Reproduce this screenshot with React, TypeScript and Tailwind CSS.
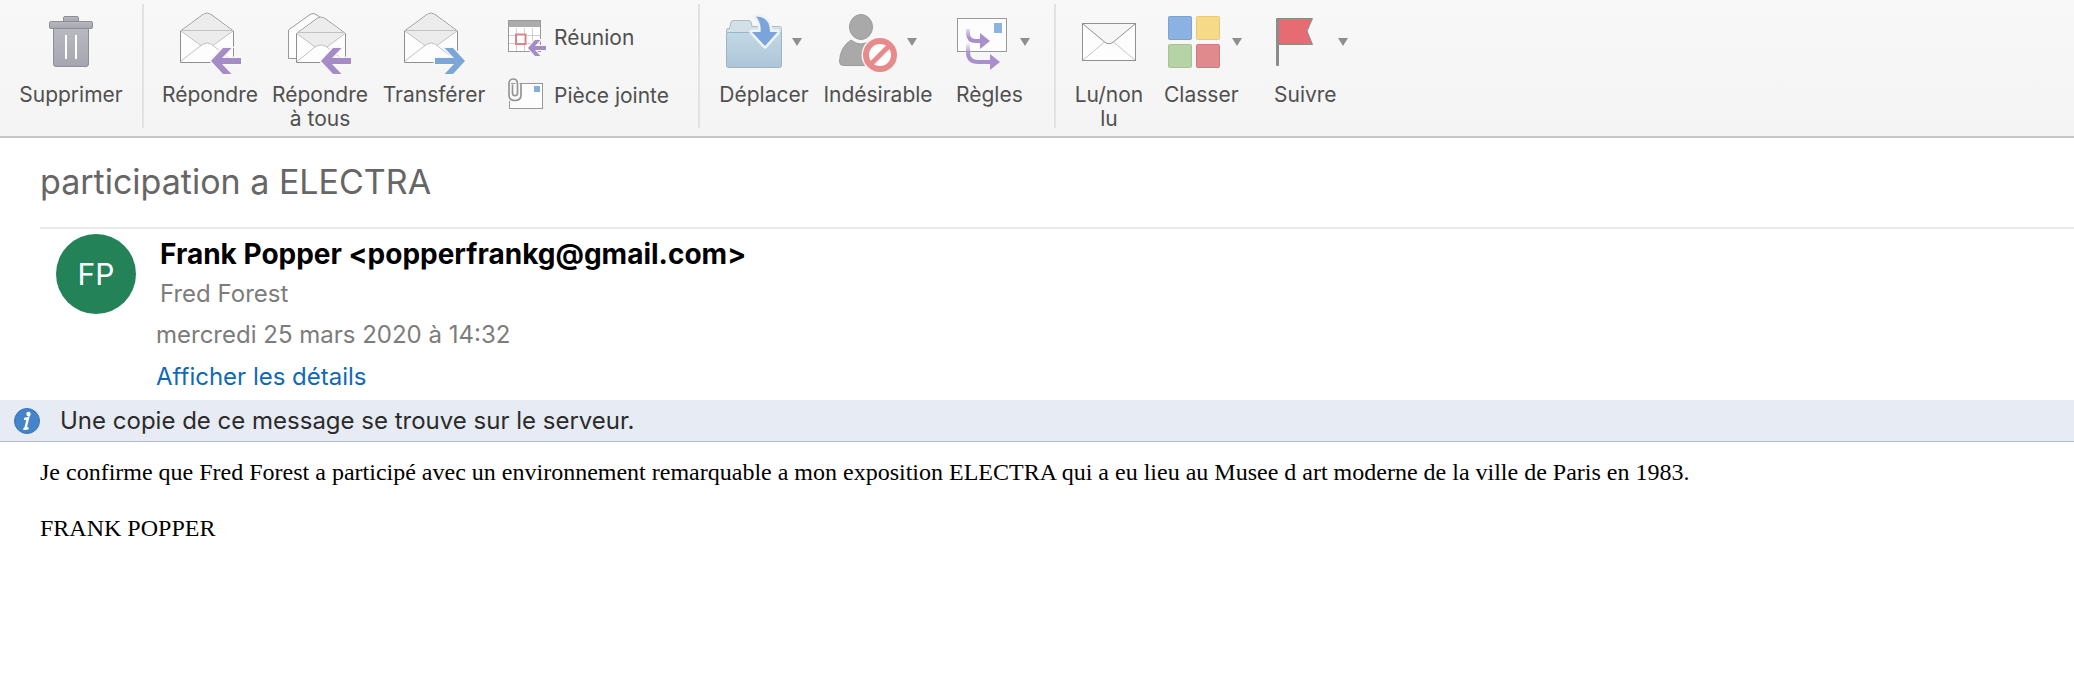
import React from 'react';

const Chevron = () => (
  <svg width="10" height="8" viewBox="0 0 10 8" className="mb-1">
    <path d="M0 0h10L5 8z" fill="#8f8f8f" />
  </svg>
);

const TrashIcon = () => (
  <svg width="44" height="64" viewBox="0 0 44 64">
    <defs>
      <linearGradient id="trash" x1="0" y1="0" x2="0" y2="1">
        <stop offset="0" stopColor="#b9b9c1" />
        <stop offset="1" stopColor="#a6a6b0" />
      </linearGradient>
    </defs>
    <g fill="url(#trash)" stroke="#8e8e96">
      <path d="M14.500 9.500V6q0-1.500 1.500-1.500h12q1.500 0 1.500 1.500v3.500" />
      <path d="M4.500 16.500h35V52q0 2.500-2.500 2.500H7q-2.500 0-2.500-2.500z" />
      <rect x="0.500" y="9.500" width="43" height="7" rx="1.500" />
    </g>
    <path d="M17 23v24M27 23v24" stroke="#fff" strokeWidth="2" />
  </svg>
);

const OpenEnvelope = () => (
  <g strokeLinejoin="round">
    <path d="M1.500 19 24 2.500q4-3 8 0L54.500 19v31.500h-53z" fill="#fdfdfd" stroke="#8f8f8f" />
    <path d="M2 19 24 3q4-3 8 0L54 19 34 33.500q-6-5-12 0z" fill="#ececec" />
    <path d="M2 18.500h52M2 19l20 14.500M54 19 34 33.500M2 49l20-15.500q6-5 12 0L54 49" fill="none" stroke="#c2c2c2" />
  </g>
);

const ReplyIcon = () => (
  <svg width="62" height="64" viewBox="0 0 62 64">
    <OpenEnvelope />
    <path
      d="M32 49 44 36h8.500L43 46h19v6H43l9.500 10H44z"
      fill="#a68cc7"
      stroke="#f8f8f8"
      strokeWidth="3"
      paintOrder="stroke"
    />
  </svg>
);

const ReplyAllIcon = () => (
  <svg width="64" height="64" viewBox="0 0 64 64">
    <path d="M.500 18 22 2.500q3-2 6 0L50 18v28.500H.500z" fill="#fdfdfd" stroke="#999" />
    <g strokeLinejoin="round">
      <path d="M8.500 21.500 29 6.500q4-3 8 0l20.500 15v29h-49z" fill="#fdfdfd" stroke="#8f8f8f" />
      <path d="M9 21.500 29 7q4-3 8 0l20 14.500-18 13.500q-6-4-12 0z" fill="#ececec" />
      <path
        d="M9 20.500h48M9 21.500 27 35M57 21.500 39 35M9 49.500 27 35q6-4 12 0l18 14.500"
        fill="none"
        stroke="#c2c2c2"
      />
    </g>
    <path
      d="M33 49 45 36h8.500L44 46h19v6H44l9.500 10H45z"
      fill="#a68cc7"
      stroke="#f8f8f8"
      strokeWidth="3"
      paintOrder="stroke"
    />
  </svg>
);

const ForwardIcon = () => (
  <svg width="62" height="64" viewBox="0 0 62 64">
    <OpenEnvelope />
    <path
      d="M62 49 50 36h-8.500L51 46H32v6h19l-9.500 10H50z"
      fill="#7ba6d8"
      stroke="#f8f8f8"
      strokeWidth="3"
      paintOrder="stroke"
    />
  </svg>
);

const MeetingIcon = () => (
  <svg width="38" height="36" viewBox="0 0 38 36">
    <rect x="0.500" y="0.500" width="32" height="31" fill="#fff" stroke="#999" />
    <path d="M1 1h31v6H1z" fill="#acacae" />
    <path d="M8.500 8v23M16.500 8v23M24.500 8v23M1 15.500h31M1 23.500h31" stroke="#cfcfcf" />
    <rect x="8" y="14.500" width="9.500" height="9.500" fill="#fff" stroke="#d98585" strokeWidth="2" />
    <path
      d="M20 28l7-8h5.500L27 26h11v4H27l5.500 6H27z"
      fill="#a68cc7"
      stroke="#f8f8f8"
      strokeWidth="2"
      paintOrder="stroke"
    />
  </svg>
);

const clip = 'M4.500 7v8q0 2.700 2.500 2.700t2.500-2.700V6q0-5-4.300-5T1 6v11q0 5.500 6 5.500t6-5.500V6.500';

const AttachmentIcon = () => (
  <svg width="36" height="36" viewBox="0 0 36 36">
    <rect x="1.500" y="5.500" width="33" height="25" fill="#fdfdfd" stroke="#999" />
    <path d="M26 8h6v6h-6z" fill="#86aedd" />
    <path d={clip} fill="none" stroke="#fafafa" strokeWidth="4" />
    <path d={clip} fill="none" stroke="#959595" strokeWidth="1.700" strokeLinecap="round" />
  </svg>
);

const MoveIcon = () => (
  <svg width="56" height="64" viewBox="0 0 56 64">
    <defs>
      <linearGradient id="folder" x1="0" y1="0" x2="0" y2="1">
        <stop offset="0" stopColor="#c3d8e5" />
        <stop offset="1" stopColor="#adc5d8" />
      </linearGradient>
    </defs>
    <path
      d="M.500 20.500V18q0-1.500 1.500-1.500h1.500L5 10q.500-1.500 2-1.500h16q1.500 0 2 1.500l1 4.500h27.500q2 0 2 2V30H.500z"
      fill="#d3e0e7"
      stroke="#a9bcc9"
    />
    <rect x="0.500" y="20.500" width="55" height="35" rx="2" fill="url(#folder)" stroke="#9cb4c6" />
    <path
      d="M30 4.500q14 0 14 15.500h7.500L39 34 26 20h8.500q1-9-4.500-15.500z"
      fill="#7aa4da"
      stroke="#eef3f7"
      strokeWidth="5"
      strokeLinejoin="round"
      paintOrder="stroke"
    />
  </svg>
);

const JunkIcon = () => (
  <svg width="58" height="64" viewBox="0 0 58 64">
    <g fill="#a9a9a9" stroke="#9b9b9b">
      <ellipse cx="22" cy="15" rx="11.500" ry="12.500" />
      <path d="M12 28q10 8 20 0 6 6 6 25.500H4.500q-4 0-4-4Q1 35 12 28z" />
    </g>
    <circle cx="41" cy="43" r="18.500" fill="#f6f6f6" />
    <circle cx="41" cy="43" r="14" fill="#fff" stroke="#e88a8b" strokeWidth="6" />
    <path d="M31.500 52.500l19-19" stroke="#e88a8b" strokeWidth="5" />
  </svg>
);

const RulesIcon = () => (
  <svg width="54" height="64" viewBox="-1 0 54 64">
    <defs>
      <linearGradient id="fade" gradientUnits="userSpaceOnUse" x1="0" y1="16" x2="0" y2="26">
        <stop offset="0" stopColor="#a98fcb" stopOpacity="0.200" />
        <stop offset="1" stopColor="#a98fcb" />
      </linearGradient>
      <linearGradient id="fadeLow" gradientUnits="userSpaceOnUse" x1="0" y1="30" x2="0" y2="42">
        <stop offset="0" stopColor="#a98fcb" stopOpacity="0" />
        <stop offset="1" stopColor="#a98fcb" />
      </linearGradient>
    </defs>
    <rect x="0.500" y="6.500" width="49" height="33" fill="#fdfdfd" stroke="#999" />
    <path d="M37 11h8v10h-8z" fill="#8db4e0" />
    <path d="M11 17v4q0 8 8 8h6" fill="none" stroke="url(#fade)" strokeWidth="4" />
    <path d="M11 31v9q0 10 10 10h13" fill="none" stroke="url(#fadeLow)" strokeWidth="4" />
    <path d="M23 21l10 8-10 8zM33 42l10 8-10 8z" fill="#a98fcb" />
  </svg>
);

const UnreadIcon = () => (
  <svg width="54" height="64" viewBox="0 0 54 64">
    <rect x="0.500" y="11.500" width="53" height="37" fill="#fdfdfd" stroke="#919191" />
    <path d="M1 48l21-17.500M53 48 32 30.500" stroke="#c6c6c6" />
    <path d="M1 12l21 17.500q5 4.500 10 0L53 12" fill="#f6f6f6" stroke="#919191" />
  </svg>
);

const CategoryIcon = () => (
  <svg width="58" height="64" viewBox="-4 0 58 64">
    <rect x="0.500" y="4.500" width="23" height="23" rx="1" fill="#8bb2e2" stroke="#7da3d1" />
    <rect x="28.500" y="4.500" width="23" height="23" rx="1" fill="#f6da88" stroke="#e3c878" />
    <rect x="0.500" y="32.500" width="23" height="23" rx="1" fill="#b6d3a6" stroke="#a6c396" />
    <rect x="28.500" y="32.500" width="23" height="23" rx="1" fill="#e08a8e" stroke="#cf7b7f" />
  </svg>
);

const FlagIcon = () => (
  <svg width="54" height="64" viewBox="-2 0 54 64">
    <path d="M2 6.500h34.500L31 19l5.500 13.500H2z" fill="#e76b72" stroke="#8c8c8c" />
    <rect x="0" y="6" width="3" height="48" rx="1" fill="#8c8c8c" />
  </svg>
);

type ToolButtonProps = {
  label: string;
  icon: React.ReactNode;
  className: string;
  menu?: boolean;
};

const ToolButton = ({ label, icon, className, menu }: ToolButtonProps) => (
  <button type="button" className={`flex shrink-0 flex-col ${className}`}>
    <span className="flex items-center gap-2.5">
      {icon}
      {menu && <Chevron />}
    </span>
    <span className="mt-[7px]">{label}</span>
  </button>
);

const Separator = () => <div className="mt-1 mb-2 w-0.5 shrink-0 bg-[#e2e2e2]" />;

const Toolbar = () => (
  <header className="flex min-h-[138px] border-b-2 border-[#c8c8c8] bg-linear-to-b from-[#f8f8f8] to-[#f4f4f4] text-[21px] leading-6 text-[#505050]">
    <div className="flex pt-3">
      <ToolButton label="Supprimer" icon={<TrashIcon />} className="w-[142px] items-center" />
    </div>
    <Separator />
    <div className="flex pt-3 pl-2.5">
      <ToolButton label="Répondre" icon={<ReplyIcon />} className="w-28 items-center" />
      <ToolButton label="Répondre à tous" icon={<ReplyAllIcon />} className="w-[108px] items-center" />
      <ToolButton label="Transférer" icon={<ForwardIcon />} className="w-[120px] items-center" />
      <div className="flex w-[204px] flex-col gap-[22px] pt-2 pl-3.5">
        <button type="button" className="flex h-9 items-center gap-2">
          <MeetingIcon />
          Réunion
        </button>
        <button type="button" className="flex h-9 items-center gap-2.5">
          <AttachmentIcon />
          Pièce jointe
        </button>
      </div>
    </div>
    <Separator />
    <div className="flex pt-3 pl-3">
      <ToolButton label="Déplacer" icon={<MoveIcon />} className="w-[104px] items-center" menu />
      <ToolButton label="Indésirable" icon={<JunkIcon />} className="w-[124px] items-center" menu />
      <ToolButton label="Règles" icon={<RulesIcon />} className="w-[114px] items-start pl-4 text-left" menu />
    </div>
    <Separator />
    <div className="flex pt-3 pl-2">
      <ToolButton label="Lu/non lu" icon={<UnreadIcon />} className="w-[90px] items-center px-2" />
      <ToolButton label="Classer" icon={<CategoryIcon />} className="w-[120px] items-start pl-2.5 text-left" menu />
      <ToolButton label="Suivre" icon={<FlagIcon />} className="w-[90px] items-start text-left" menu />
    </div>
  </header>
);

const InfoIcon = () => (
  <svg width="26" height="26" viewBox="0 0 26 26" className="shrink-0">
    <circle cx="13" cy="13" r="12.500" fill="#4584c9" stroke="#3871b4" />
    <circle cx="14.500" cy="6" r="2.200" fill="#fff" />
    <path
      d="M10 10.800q2 .200 4-.800l-2.300 9.500q-.300 1.800 2.800.500M9.500 20.300q1.500.700 3 .300"
      fill="none"
      stroke="#fff"
      strokeWidth="2.400"
    />
  </svg>
);

const App = () => {
  return (
    <div className="min-h-screen bg-white font-['Inter',sans-serif]">
      <Toolbar />
      <main className="text-[24px]">
        <section className="pl-10">
          <h1 className="flex h-[91px] items-center border-b-2 border-[#e9e9e9] pb-0.5 text-[34px] text-[#666]">
            participation a ELECTRA
          </h1>
          <div className="flex gap-5 pt-[5px] pb-0.5 pl-4">
            <div className="flex h-20 w-20 shrink-0 items-center justify-center rounded-full bg-[#248259] text-[30px] text-white">
              FP
            </div>
            <div className="text-[#7c7c7c]">
              <h2 className="pl-1 text-[28px] leading-10 font-bold text-black">
                Frank Popper &lt;popperfrankg@gmail.com&gt;
              </h2>
              <p className="pl-1 leading-10">Fred Forest</p>
              <p className="leading-[42px]">mercredi 25 mars 2020 à 14:32</p>
              <a href="#details" className="block leading-[42px] text-[#1069b8]">
                Afficher les détails
              </a>
            </div>
          </div>
        </section>
        <div className="flex min-h-[42px] items-center gap-5 border-b border-[#b3b6c3] bg-[#e7ebf4] pl-3.5 text-[#2b2b2b]">
          <InfoIcon />
          <p>Une copie de ce message se trouve sur le serveur.</p>
        </div>
        <article className="px-10 pt-4 font-['Liberation_Serif',serif] text-[24px] leading-7 text-black">
          <p>
            Je confirme que Fred Forest a participé avec un environnement remarquable a mon exposition ELECTRA qui a eu
            lieu au Musee d art moderne de la ville de Paris en 1983.
          </p>
          <p className="pt-7">FRANK POPPER</p>
        </article>
      </main>
    </div>
  );
};

export default App;
